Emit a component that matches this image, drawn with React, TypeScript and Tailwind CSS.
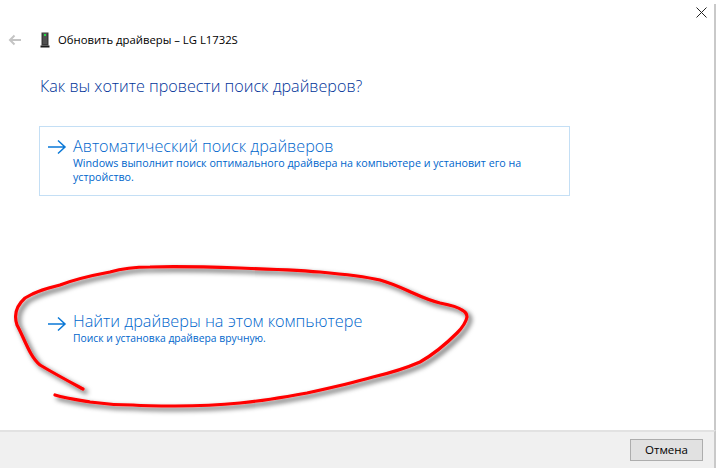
export default function App() {
  const font = { fontFamily: '"Open Sans", "Noto Sans", sans-serif' };
  return (
    <div className="relative w-[717px] h-[468px] bg-white overflow-hidden flex flex-col" style={font}>
      <div className="flex-1 flex flex-col border-r-2 border-[#c9c9c9] mr-[1px] mt-[4px]">
        <div className="flex justify-end pt-[3px]">
          <svg width="11" height="11" viewBox="0 0 11 11" className="mr-[7px]" fill="none" stroke="#222" strokeWidth="1"><path d="M.5.5l10 10M10.5.5l-10 10" /></svg>
        </div>
        <div className="flex items-center mt-[14px] h-[16px]">
          <svg width="14" height="12" viewBox="0 0 14 12" className="ml-[8px]" fill="none" stroke="#c4c4c4" strokeWidth="2"><path d="M13 6H2M6.5 1.5L2 6l4.5 4.5" /></svg>
          <svg width="10" height="16" viewBox="0 0 10 16" className="ml-[18px]">
            <rect x="1.5" y="0.5" width="7" height="13" fill="#3a3a3a" />
            <rect x="3" y="1" width="4" height="11" fill="#4f4f4f" />
            <rect x="4" y="2" width="2" height="2" fill="#22dd44" />
            <rect x="0.5" y="13.5" width="9" height="2" fill="#1a1a1a" />
          </svg>
          <span className="ml-[8px] text-[11.3px] leading-[16px] text-black">Обновить драйверы – LG L1732S</span>
        </div>
        <h1 className="ml-[40px] mt-[28px] text-[16.15px] leading-[20px] font-light text-[#003399]">Как вы хотите провести поиск драйверов?</h1>
        <div className="ml-[39px] mt-[30px] w-[531px] h-[70px] border border-[#c4dff5] flex pl-[7px] pt-[8px]">
          <svg width="20" height="16" viewBox="0 0 20 16" className="mt-[4px]" fill="none" stroke="#0a78d7" strokeWidth="1.5"><path d="M1 8h17M11 1.5L18 8l-7 6.5" /></svg>
          <div className="ml-[6px] text-[#0066cc]">
            <div className="text-[16.2px] leading-[22px] font-light">Автоматический поиск драйверов</div>
            <div className="text-[10.7px] leading-[14px] mt-[-1px] w-[470px]">Windows выполнит поиск оптимального драйвера на компьютере и установит его на устройство.</div>
          </div>
        </div>
        <div className="ml-[47px] mt-[114px] flex">
          <svg width="20" height="16" viewBox="0 0 20 16" className="mt-[6px]" fill="none" stroke="#0a78d7" strokeWidth="1.5"><path d="M1 8h17M11 1.5L18 8l-7 6.5" /></svg>
          <div className="ml-[6px] text-[#0066cc]">
            <div className="text-[16.25px] leading-[22px] font-light">Найти драйверы на этом компьютере</div>
            <div className="text-[10.3px] leading-[14px] mt-[-1px]">Поиск и установка драйвера вручную.</div>
          </div>
        </div>
      </div>
      <div className="h-[38px] mr-[1px] bg-[#f0f0f0] border-t-2 border-[#e2e2e2] border-r-2 border-r-[#c9c9c9] flex items-center justify-end pr-[11px]">
        <button className="w-[73px] h-[22px] bg-[#e1e1e1] border border-[#adadad] text-[11.5px] leading-[18px] text-black">Отмена</button>
      </div>
      <svg className="absolute left-0 top-0 pointer-events-none" width="717" height="468" viewBox="0 0 717 468" fill="none">
        <defs>
          <filter id="s" x="-10%" y="-10%" width="120%" height="130%">
            <feDropShadow dx="3" dy="3" stdDeviation="2.5" floodColor="#000" floodOpacity="0.7" />
          </filter>
        </defs>
        <g filter="url(#s)" stroke="#ff0000" strokeWidth="3.2" strokeLinecap="round" strokeLinejoin="round">
          <path d="M83 389C70 382 55 374 40 365C30 357 25 340 17 325C14 316 16 306 25 298C36 291 48 288 60 285C78 278 94 275 110 272C124 268 138 267 150 267C180 266 210 267 240 268C270 269 296 270 320 272C342 274 362 276 380 280C394 284 404 289 413 293C424 298 432 301 440 303C450 305 458 307 462 310C466 312 467 315 467 317C466 322 462 328 457 333C446 344 434 354 420 362C404 369 390 373 373 377C352 383 330 388 307 393C285 397 262 401 240 403C220 405 200 406 175 406C160 406 146 406 133 405C118 405 104 404 90 402C78 400 65 398 55 395" />
        </g>
      </svg>
    </div>
  );
}
